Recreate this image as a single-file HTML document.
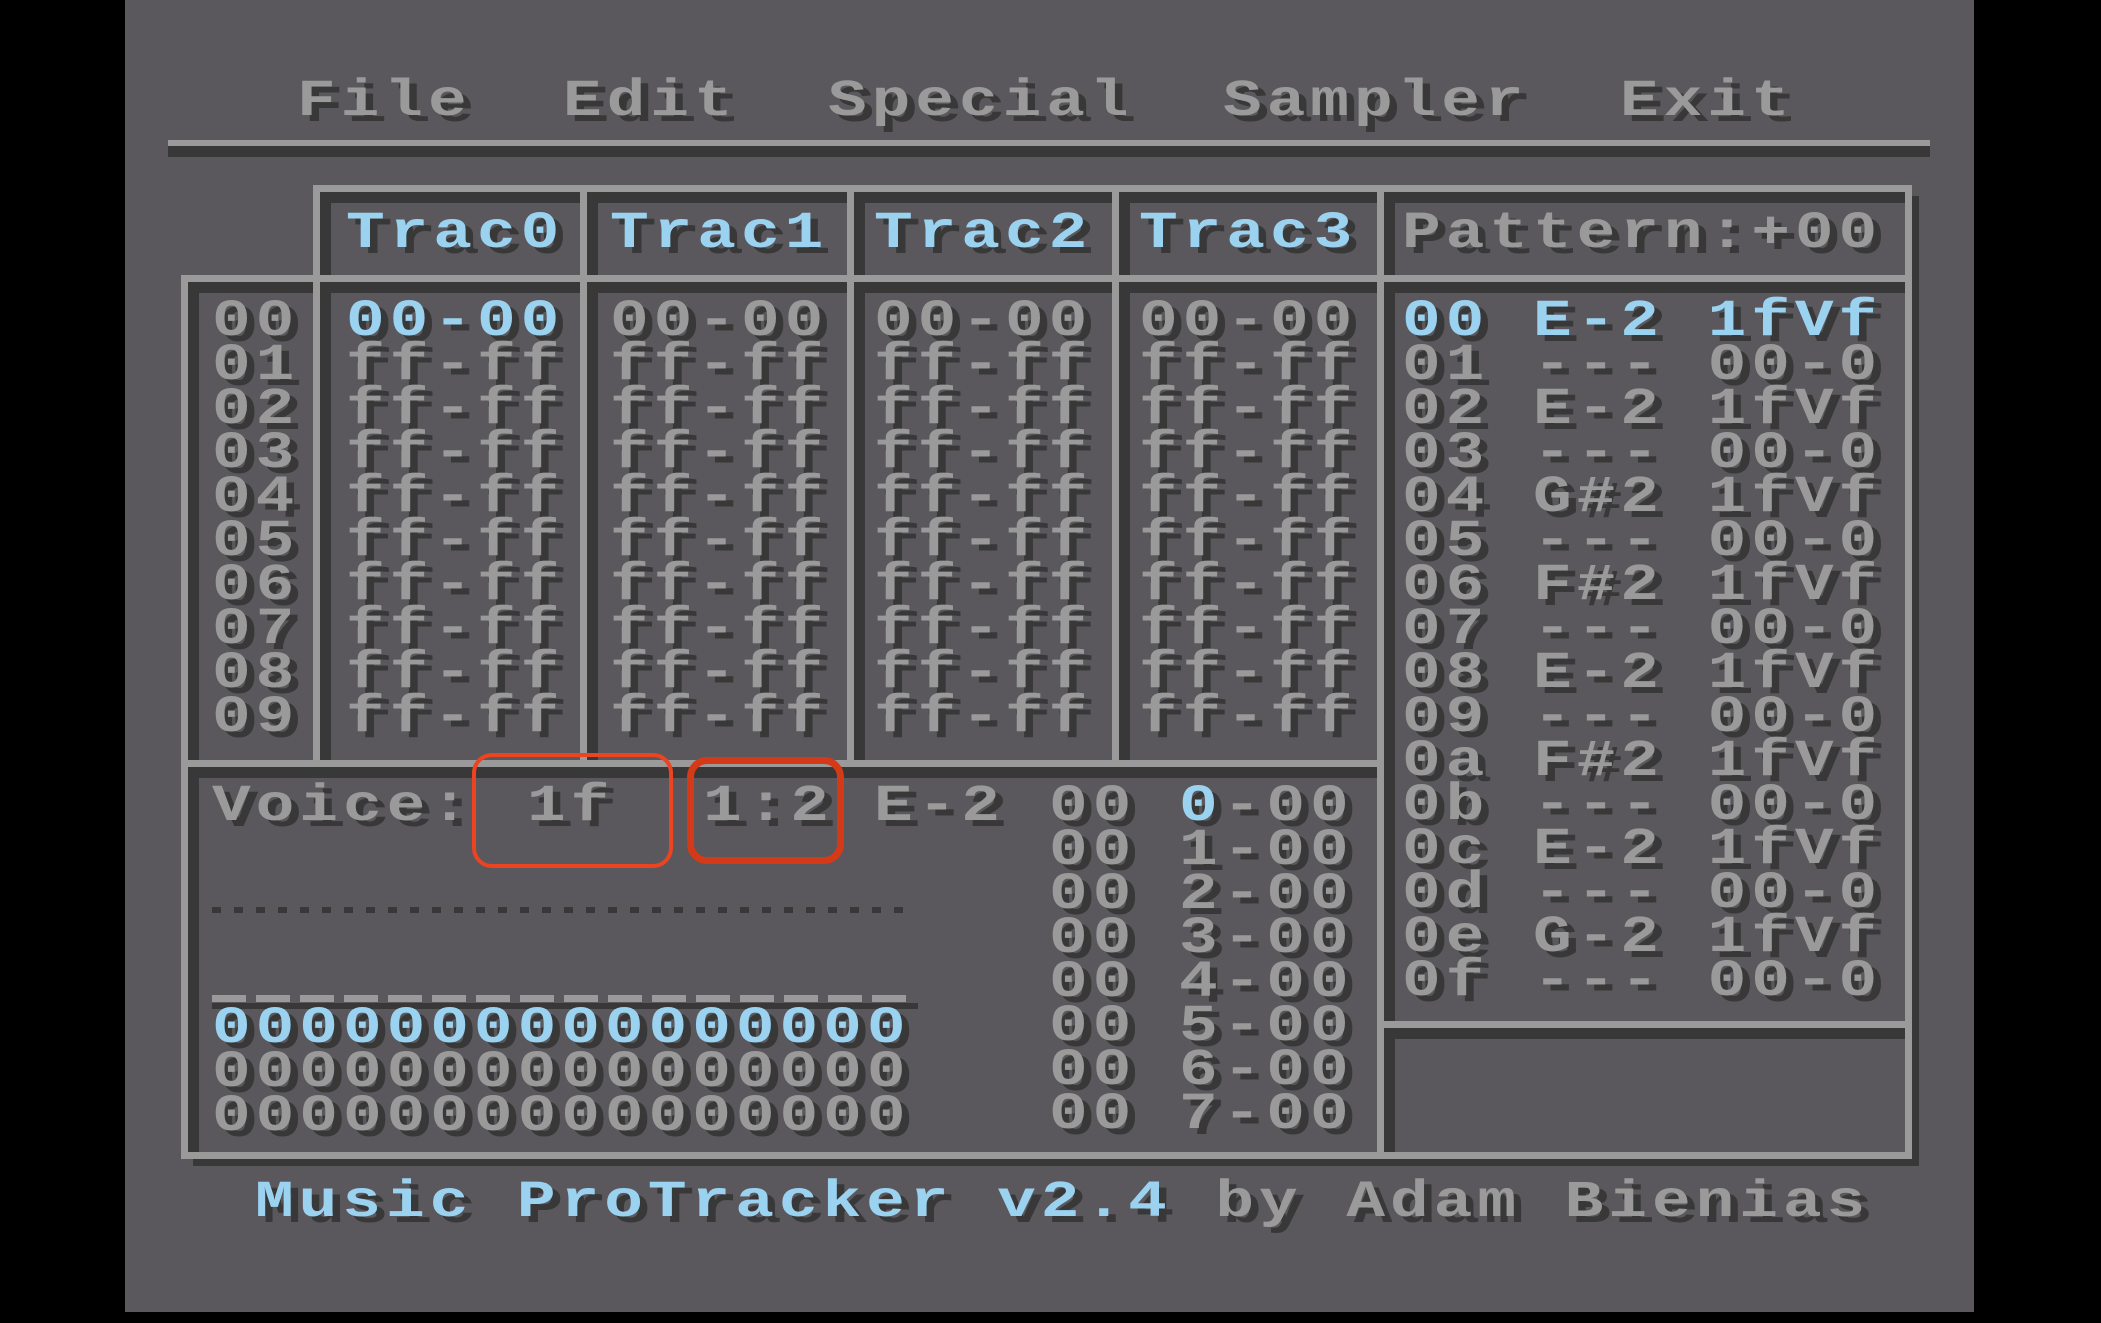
<!DOCTYPE html>
<html><head><meta charset="utf-8"><style>
html,body{margin:0;padding:0}
body{width:2101px;height:1323px;background:#000;position:relative;overflow:hidden}
#p{position:absolute;left:125px;top:0;width:1849px;height:1312px;background:#5a585c}
.b{position:absolute;box-sizing:border-box;border:7px solid #9a9a9a;box-shadow:inset 11px 11px 0 #383838}
.t{position:absolute;margin-top:4px;font-family:"Liberation Mono",monospace;font-weight:bold;font-size:52px;line-height:44px;height:44px;letter-spacing:4px;white-space:pre;color:#9a9a9a;text-shadow:6px 6px 0 #383838;transform:scaleX(1.24);transform-origin:0 0}
.c{color:#9ad2f0}
.r{position:absolute;box-sizing:border-box;border-radius:20px}
</style></head><body>
<div id="p"></div>
<div class="t" style="left:297px;top:76px">File</div>
<div class="t" style="left:563px;top:76px">Edit</div>
<div class="t" style="left:828px;top:76px">Special</div>
<div class="t" style="left:1223px;top:76px">Sampler</div>
<div class="t" style="left:1620px;top:76px">Exit</div>
<div style="position:absolute;left:168px;top:140px;width:1762px;height:6px;background:#9a9a9a"></div>
<div style="position:absolute;left:168px;top:146px;width:1762px;height:11px;background:#383838"></div>
<div style="position:absolute;left:1905px;top:196px;width:14px;height:970px;background:#383838"></div>
<div style="position:absolute;left:193px;top:1152px;width:1726px;height:14px;background:#383838"></div>
<div class="b" style="left:313px;top:185px;width:274px;height:97px"></div>
<div class="b" style="left:580px;top:185px;width:274px;height:97px"></div>
<div class="b" style="left:847px;top:185px;width:272px;height:97px"></div>
<div class="b" style="left:1112px;top:185px;width:272px;height:97px"></div>
<div class="b" style="left:1377px;top:185px;width:535px;height:97px"></div>
<div class="b" style="left:181px;top:275px;width:139px;height:492px"></div>
<div class="b" style="left:313px;top:275px;width:274px;height:492px"></div>
<div class="b" style="left:580px;top:275px;width:274px;height:492px"></div>
<div class="b" style="left:847px;top:275px;width:272px;height:492px"></div>
<div class="b" style="left:1112px;top:275px;width:272px;height:492px"></div>
<div class="b" style="left:1377px;top:275px;width:535px;height:753px"></div>
<div class="b" style="left:1377px;top:1021px;width:535px;height:138px"></div>
<div class="b" style="left:181px;top:760px;width:1203px;height:399px"></div>
<div class="t c" style="left:346px;top:208px">Trac0</div>
<div class="t c" style="left:610px;top:208px">Trac1</div>
<div class="t c" style="left:874px;top:208px">Trac2</div>
<div class="t c" style="left:1139px;top:208px">Trac3</div>
<div class="t" style="left:1402px;top:208px">Pattern:+00</div>
<div class="t" style="left:212px;top:296px">00
01
02
03
04
05
06
07
08
09</div>
<div class="t" style="left:346px;top:296px"><span class="c">00-00</span>
ff-ff
ff-ff
ff-ff
ff-ff
ff-ff
ff-ff
ff-ff
ff-ff
ff-ff</div>
<div class="t" style="left:610px;top:296px">00-00
ff-ff
ff-ff
ff-ff
ff-ff
ff-ff
ff-ff
ff-ff
ff-ff
ff-ff</div>
<div class="t" style="left:874px;top:296px">00-00
ff-ff
ff-ff
ff-ff
ff-ff
ff-ff
ff-ff
ff-ff
ff-ff
ff-ff</div>
<div class="t" style="left:1139px;top:296px">00-00
ff-ff
ff-ff
ff-ff
ff-ff
ff-ff
ff-ff
ff-ff
ff-ff
ff-ff</div>
<div class="t" style="left:1402px;top:296px"><span class="c">00 E-2 1fVf</span>
01 --- 00-0
02 E-2 1fVf
03 --- 00-0
04 G#2 1fVf
05 --- 00-0
06 F#2 1fVf
07 --- 00-0
08 E-2 1fVf
09 --- 00-0
0a F#2 1fVf
0b --- 00-0
0c E-2 1fVf
0d --- 00-0
0e G-2 1fVf
0f --- 00-0</div>
<div class="t" style="left:212px;top:781px">Voice:</div>
<div class="t" style="left:527px;top:781px">1f</div>
<div class="t" style="left:703px;top:781px">1:2</div>
<div class="t" style="left:874px;top:781px">E-2</div>
<div class="t" style="left:1049px;top:781px">00
00
00
00
00
00
00
00</div>
<div class="t" style="left:1179px;top:781px"><span class="c">0</span>-00
1-00
2-00
3-00
4-00
5-00
6-00
7-00</div>
<div style="position:absolute;left:212px;top:907px;width:700px;height:6px;background:repeating-linear-gradient(90deg,#383838 0 9px,transparent 9px 22px)"></div>
<div style="position:absolute;left:212px;top:995px;width:700px;height:7px;background:repeating-linear-gradient(90deg,#9a9a9a 0 34px,transparent 34px 44px)"></div>
<div style="position:absolute;left:212px;top:1003px;width:706px;height:6px;background:#383838"></div>
<div class="t" style="left:212px;top:1003px"><span class="c">0000000000000000</span>
0000000000000000
0000000000000000</div>
<div class="r" style="left:472px;top:753px;width:201px;height:115px;border:4px solid #ec4420"></div>
<div class="r" style="left:687px;top:757px;width:157px;height:107px;border:7px solid #d43a18"></div>
<div class="t" style="left:255px;top:1177px"><span class="c">Music ProTracker v2.4</span> by Adam Bienias</div>
</body></html>
